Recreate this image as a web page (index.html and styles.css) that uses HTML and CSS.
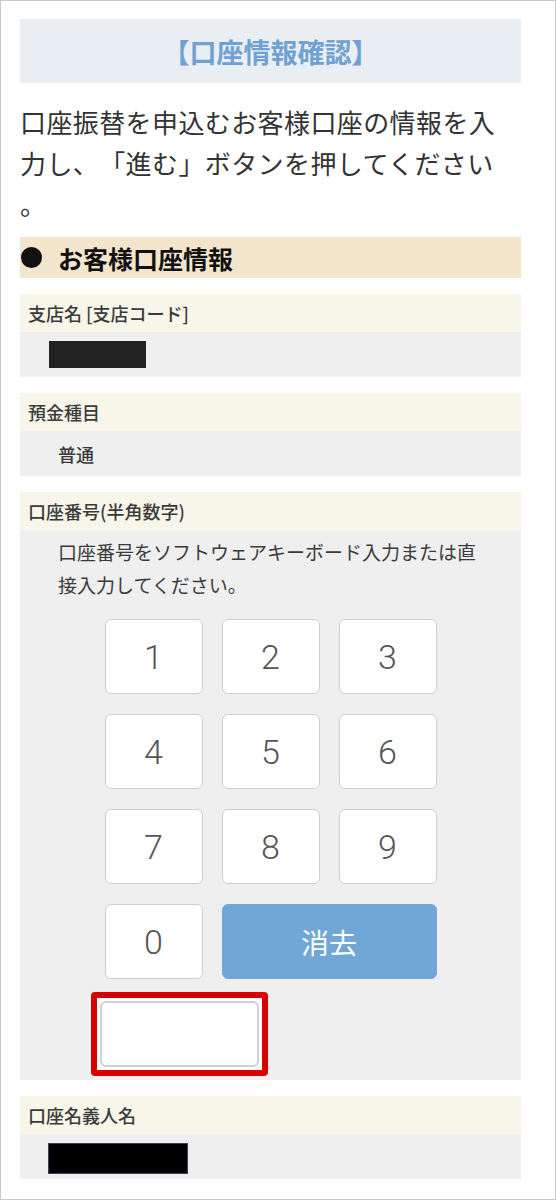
FILE: index.html
```html
<!DOCTYPE html>
<html lang="ja">
<head>
<meta charset="utf-8">
<title>口座情報確認</title>
<link rel="stylesheet" href="styles.css">
</head>
<body>
<div class="frame">
  <div class="title">【口座情報確認】</div>
  <p class="lead">口座振替を申込むお客様口座の情報を入力し、「進む」ボタンを押してください。</p>
  <div class="section-head"><span class="dot"></span><span>お客様口座情報</span></div>

  <div class="field">
    <div class="label">支店名 [支店コード]</div>
    <div class="value value-row"><span class="redact redact-a"></span></div>
  </div>

  <div class="field">
    <div class="label">預金種目</div>
    <div class="value value-row"><span class="val-text">普通</span></div>
  </div>

  <div class="field">
    <div class="label">口座番号(半角数字)</div>
    <div class="value value-keypad">
      <p class="hint">口座番号をソフトウェアキーボード入力または直接入力してください。</p>
      <div class="keypad">
        <button class="key">1</button>
        <button class="key">2</button>
        <button class="key">3</button>
        <button class="key">4</button>
        <button class="key">5</button>
        <button class="key">6</button>
        <button class="key">7</button>
        <button class="key">8</button>
        <button class="key">9</button>
        <button class="key">0</button>
        <button class="key key-clear">消去</button>
      </div>
      <div class="input-row">
        <div class="highlight"><input class="acct-input" type="text" aria-label="口座番号"></div>
      </div>
    </div>
  </div>

  <div class="field">
    <div class="label">口座名義人名</div>
    <div class="value value-row"><span class="redact redact-b"></span></div>
  </div>
</div>
</body>
</html>
```

FILE: styles.css
```css
* { box-sizing: border-box; }

body {
  margin: 0;
  background: #ffffff;
  font-family: "Noto Sans CJK JP", "Noto Sans", sans-serif;
  color: #333333;
  text-spacing-trim: space-all;
}

.frame {
  width: 556px;
  height: 1200px;
  border: 1px solid #c9c9c9;
  padding: 18px 34px 0 19px;
  overflow: hidden;
}

.title {
  height: 64px;
  background: #e9eef2;
  display: flex;
  align-items: center;
  justify-content: center;
  font-size: 27px;
  font-weight: 700;
  color: #6fa2d3;
  text-spacing-trim: trim-both;
}

.lead {
  margin: 18px 11px 0 0;
  font-size: 26px;
  letter-spacing: 0.4px;
  line-height: 41px;
  color: #333333;
  line-break: anywhere;
  text-spacing-trim: space-all;
}

.section-head {
  margin-top: 13px;
  height: 41px;
  background: #f3e6cd;
  display: flex;
  align-items: center;
  padding-left: 1px;
  font-size: 25px;
  font-weight: 700;
  color: #111111;
}

.dot {
  width: 21px;
  height: 21px;
  border-radius: 50%;
  background: #111111;
  margin-right: 16px;
}

.field { margin-top: 16px; }

.label {
  height: 38px;
  background: #f8f6e8;
  display: flex;
  align-items: center;
  padding-left: 8px;
  font-size: 18px;
  font-weight: 500;
  color: #3a3a3a;
}

.value { background: #efefef; }

.value-row {
  height: 45px;
  display: flex;
  align-items: center;
  padding-left: 38px;
}

.val-text {
  font-size: 18px;
  font-weight: 500;
  color: #3a3a3a;
}

.redact { display: block; background: #222222; }
.redact-a { width: 97px; height: 27px; margin-left: -9px; }
.redact-b {
  width: 140px;
  height: 31px;
  margin-left: -10px;
  margin-top: 4px;
  background: #000000;
  border: 1px solid #3a4458;
}

.value-keypad { padding: 5px 0 4px 0; }

.hint {
  margin: 0 38px 0 38px;
  font-size: 19px;
  line-height: 33px;
  color: #3a3a3a;
}

.keypad {
  margin-top: 18px;
  display: grid;
  grid-template-columns: repeat(3, 98px);
  grid-auto-rows: 75px;
  column-gap: 19px;
  row-gap: 20px;
  justify-content: center;
}

.key {
  background: #ffffff;
  border: 1px solid #cdd0d3;
  border-radius: 6px;
  font-family: Roboto, "Noto Sans", sans-serif;
  font-weight: 300;
  font-size: 34px;
  color: #555555;
  padding: 0;
}

.key-clear {
  grid-column: span 2;
  background: #71a7d6;
  border-color: #71a7d6;
  color: #ffffff;
  font-family: "Noto Sans CJK JP", sans-serif;
  font-weight: 400;
  font-size: 28px;
}

.input-row {
  margin-top: 13px;
  padding-left: 71px;
}

.highlight {
  width: 177px;
  height: 84px;
  border: 6px solid #d90000;
  border-radius: 4px;
  padding: 3px;
  background: #ffffff;
}

.acct-input {
  display: block;
  width: 100%;
  height: 100%;
  border: 2px solid #ccd1d5;
  border-radius: 6px;
  background: #ffffff;
  outline: none;
}
```
